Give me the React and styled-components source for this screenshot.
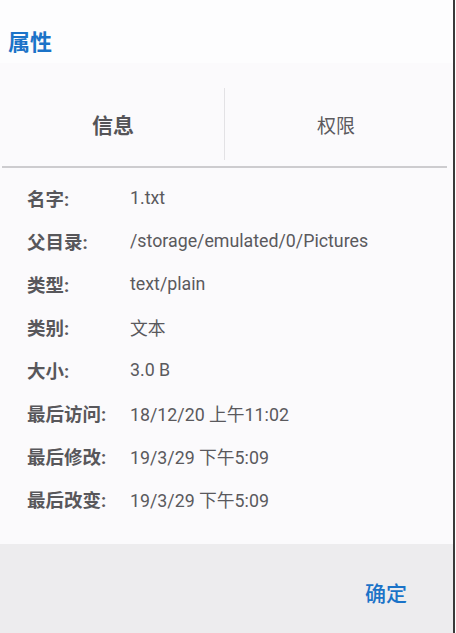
import styled, { createGlobalStyle } from "styled-components";

const GlobalStyle = createGlobalStyle`
  html, body {
    margin: 0;
    padding: 0;
    background: #ffffff;
  }
  body {
    font-family: Roboto, "Noto Sans CJK SC", sans-serif;
  }
`;

const Dialog = styled.div`
  width: 453px;
  height: 633px;
  display: flex;
  flex-direction: column;
  background: #fbfafc;
  border-right: 2px solid #3a3a3a;
  overflow: hidden;
`;

const Title = styled.h1`
  margin: 0;
  height: 63px;
  box-sizing: border-box;
  padding: 0 0 5px 8px;
  display: flex;
  align-items: flex-end;
  background: #fdfdfe;
  color: #1b73c8;
  font-size: 22px;
  font-weight: 700;
  line-height: 30px;
`;

const Tabs = styled.div`
  height: 105px;
  box-sizing: border-box;
  margin: 0 6px 0 2px;
  padding: 25px 0 6px;
  display: flex;
  border-bottom: 2px solid #cdcccf;
`;

const Tab = styled.div`
  flex: 1;
  display: flex;
  align-items: center;
  justify-content: center;
  font-size: ${(p) => (p.$active ? "21px" : "19px")};
  font-weight: ${(p) => (p.$active ? 700 : 400)};
  color: ${(p) => (p.$active ? "#555458" : "#5c5b5f")};
  & + & {
    border-left: 1px solid #e3e2e5;
  }
`;

const Info = styled.div`
  flex: 1;
  padding: 8px 0 0 27px;
  display: flex;
  flex-direction: column;
`;

const Row = styled.div`
  height: 43px;
  display: flex;
  align-items: center;
`;

const Label = styled.span`
  width: 103px;
  flex-shrink: 0;
  font-size: 18.5px;
  font-weight: 700;
  color: #58575b;
`;

const Value = styled.span`
  font-size: 17.8px;
  color: #5a595d;
`;

const Footer = styled.div`
  height: 89px;
  flex-shrink: 0;
  display: flex;
  align-items: center;
  justify-content: flex-end;
  padding: 6px 46px 0 0;
  box-sizing: border-box;
  background: #edecee;
`;

const OkButton = styled.button`
  border: none;
  background: none;
  padding: 0;
  font-family: inherit;
  font-size: 21px;
  font-weight: 500;
  color: #1b73c8;
  cursor: pointer;
`;

const rows = [
  ["名字:", "1.txt"],
  ["父目录:", "/storage/emulated/0/Pictures"],
  ["类型:", "text/plain"],
  ["类别:", "文本"],
  ["大小:", "3.0 B"],
  ["最后访问:", "18/12/20 上午11:02"],
  ["最后修改:", "19/3/29 下午5:09"],
  ["最后改变:", "19/3/29 下午5:09"],
];

function App() {
  return (
    <>
      <GlobalStyle />
      <Dialog>
        <Title>属性</Title>
        <Tabs>
          <Tab $active>信息</Tab>
          <Tab>权限</Tab>
        </Tabs>
        <Info>
          {rows.map(([label, value]) => (
            <Row key={label}>
              <Label>{label}</Label>
              <Value>{value}</Value>
            </Row>
          ))}
        </Info>
        <Footer>
          <OkButton>确定</OkButton>
        </Footer>
      </Dialog>
    </>
  );
}

export default App;
